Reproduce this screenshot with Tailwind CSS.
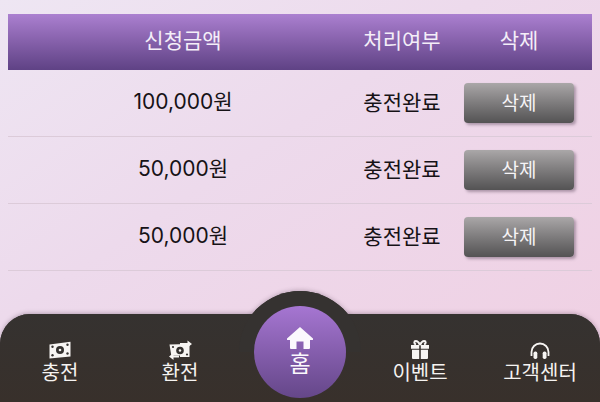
<!DOCTYPE html>
<html lang="ko">
<head>
<meta charset="utf-8">
<script src="https://cdn.jsdelivr.net/npm/@tailwindcss/browser@4"></script>
</head>
<body class="m-0">
<div class="relative w-[600px] h-[402px] overflow-hidden flex flex-col bg-gradient-to-br from-[#eee6f3] via-[#eddaec] via-40% to-[#f0cfe2] font-['Noto_Sans_CJK_KR','Noto_Sans',sans-serif]">
  <main class="flex-1 pt-[14px] px-2">
    <div class="grid grid-cols-[350px_88px_146px] h-14 items-center bg-gradient-to-b from-[#ab80d0] via-[#8560aa] to-[#5f4285] text-[21px] text-[#f4eef8]">
      <div class="text-center pb-[4px]">신청금액</div>
      <div class="text-center pb-[4px]">처리여부</div>
      <div class="text-center pb-[4px]">삭제</div>
    </div>
    <div class="grid grid-cols-[350px_88px_146px] h-[67px] items-center border-b border-[#dccbd9] text-[21px] text-[#161216]">
      <div class="text-center pb-[2px] font-['Inter','Noto_Sans_CJK_KR',sans-serif]">100,000원</div>
      <div class="text-center pb-[2px]">충전완료</div>
      <button class="w-[110px] h-10 ml-[18px] -mt-[1px] pb-[1px] rounded-[4px] bg-gradient-to-b from-[#aaa7a8] to-[#545354] text-[#f6f4f6] text-[19px] shadow-[2px_2px_3px_rgba(90,70,90,0.45)]">삭제</button>
    </div>
    <div class="grid grid-cols-[350px_88px_146px] h-[67px] items-center border-b border-[#dccbd9] text-[21px] text-[#161216]">
      <div class="text-center pb-[2px] font-['Inter','Noto_Sans_CJK_KR',sans-serif]">50,000원</div>
      <div class="text-center pb-[2px]">충전완료</div>
      <button class="w-[110px] h-10 ml-[18px] -mt-[1px] pb-[1px] rounded-[4px] bg-gradient-to-b from-[#aaa7a8] to-[#545354] text-[#f6f4f6] text-[19px] shadow-[2px_2px_3px_rgba(90,70,90,0.45)]">삭제</button>
    </div>
    <div class="grid grid-cols-[350px_88px_146px] h-[67px] items-center border-b border-[#dccbd9] text-[21px] text-[#161216]">
      <div class="text-center pb-[2px] font-['Inter','Noto_Sans_CJK_KR',sans-serif]">50,000원</div>
      <div class="text-center pb-[2px]">충전완료</div>
      <button class="w-[110px] h-10 ml-[18px] -mt-[1px] pb-[1px] rounded-[4px] bg-gradient-to-b from-[#aaa7a8] to-[#545354] text-[#f6f4f6] text-[19px] shadow-[2px_2px_3px_rgba(90,70,90,0.45)]">삭제</button>
    </div>
  </main>
  <nav class="relative h-[88px] rounded-t-[30px] bg-gradient-to-b from-[#353230] to-[#38302b] shadow-[0_-1px_4px_rgba(80,60,80,0.35)] grid grid-cols-5 text-[20px] text-[#f5f3f1]">
    <div class="absolute left-[239px] top-[-23px] w-[122px] h-[122px] rounded-full bg-[#353230] shadow-[0_-1px_4px_rgba(80,60,80,0.3)]"></div>
    <div class="absolute inset-x-0 top-0 bottom-0 rounded-t-[30px] bg-gradient-to-b from-[#353230] to-[#38302b]"></div>
    <div class="absolute left-[239px] top-[-23px] w-[122px] h-[61px] rounded-t-full bg-[#353230]"></div>
    <div class="relative flex flex-col items-center pt-[27px] leading-[22px]">
      <svg class="w-[22px] h-[18px]" viewBox="0 0 22 18"><path fill="#f7f5f3" d="M.5 3.500 21.500 .8v14.700L.5 17.500Z"/><circle cx="11" cy="9" r="4" fill="#353230"/><circle cx="11" cy="9" r="1.300" fill="#f7f5f3"/><circle cx="3.500" cy="5.800" r="1.200" fill="#353230"/><circle cx="18.500" cy="3.800" r="1.200" fill="#353230"/><circle cx="3.500" cy="14.200" r="1.200" fill="#353230"/><circle cx="18.500" cy="12.500" r="1.200" fill="#353230"/></svg>
      <span class="mt-[2px]">충전</span>
    </div>
    <div class="relative flex flex-col items-center pt-[26px] leading-[22px]">
      <svg class="w-[24px] h-[20px]" viewBox="0 0 24 20"><path fill="#f7f5f3" d="M1.500 4.500 21.500 4v13H3.500Z"/><circle cx="12" cy="10.500" r="3.800" fill="#353230"/><circle cx="12" cy="10.500" r="1.200" fill="#f7f5f3"/><circle cx="5" cy="7" r="1.100" fill="#353230"/><circle cx="19" cy="14.500" r="1.100" fill="#353230"/><path fill="none" stroke="#353230" stroke-width="2" d="M12 4h9M3 16.500h9"/><path fill="#f7f5f3" d="M12 3h7.500V.5L24 4l-4.500 3.500V5H12ZM11 15.500H5.500V13L1 16.500 5.500 20v-2.500H11Z"/></svg>
      <span class="mt-[1px]">환전</span>
    </div>
    <div></div>
    <div class="relative flex flex-col items-center pt-[26px] leading-[22px]">
      <svg class="w-[20px] h-[19px]" viewBox="0 0 20 19"><path fill="#f7f5f3" d="M1 5h8.200v3.700H1ZM10.800 5H19v3.700h-8.200ZM2 9.700h7.200V19H3a1 1 0 0 1-1-1ZM10.800 9.700H18V18a1 1 0 0 1-1 1h-6.200Z"/><path fill="none" stroke="#f7f5f3" stroke-width="2" d="M10 5C8.500 1.500 7 1 5.800 1 4 1 3.600 3.800 6 4.400M10 5c1.500-3.500 3-4 4.200-4 1.800 0 2.200 2.800-.2 3.400"/></svg>
      <span class="mt-[2px]">이벤트</span>
    </div>
    <div class="relative flex flex-col items-center pt-[28px] leading-[22px]">
      <svg class="w-[20px] h-[17px]" viewBox="0 0 20 17"><path fill="none" stroke="#f7f5f3" stroke-width="1.800" d="M1.500 14V10a8.500 8.500 0 0 1 17 0v4"/><rect x="3.500" y="9.500" width="3.800" height="7.500" rx="1.700" fill="#f7f5f3"/><rect x="12.700" y="9.500" width="3.800" height="7.500" rx="1.700" fill="#f7f5f3"/></svg>
      <span class="mt-[2px]">고객센터</span>
    </div>
    <div class="absolute left-[254px] top-[-8px] w-[92px] h-[92px] rounded-full bg-gradient-to-b from-[#a676d2] to-[#654789] flex flex-col items-center pt-[21px] leading-[24px] text-[23px] text-[#fbf8fd]">
      <svg class="w-[26px] h-[22px]" viewBox="0 0 26 22"><path fill="#fbf8fd" d="M13 0 26 11.500a1 1 0 0 1-.8 1.500H23v8a1 1 0 0 1-1 1h-5.500v-7.500h-7V22H4a1 1 0 0 1-1-1v-8H.8A1 1 0 0 1 0 11.500Z"/></svg>
      <span class="mt-[1px]">홈</span>
    </div>
  </nav>
</div>
</body>
</html>
